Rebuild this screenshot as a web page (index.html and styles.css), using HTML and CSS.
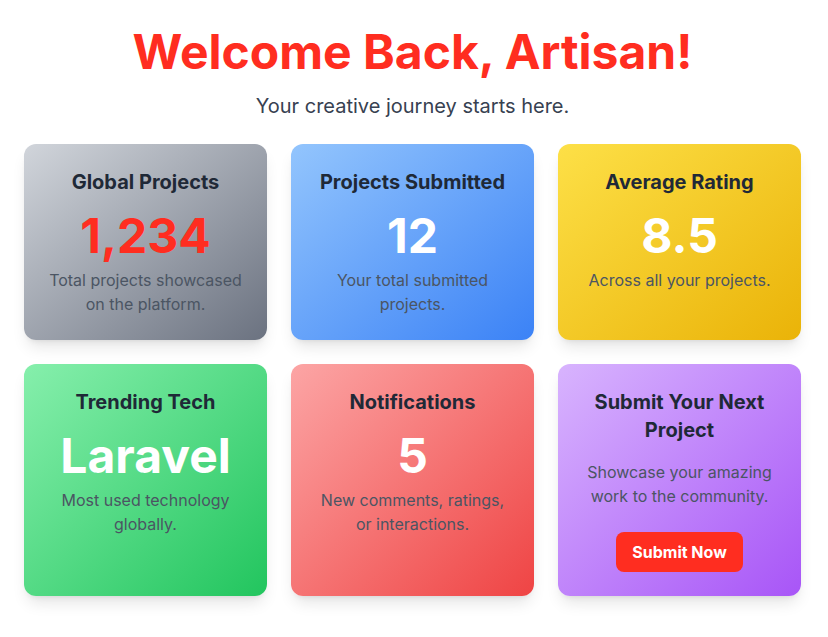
FILE: index.html
```html
<!DOCTYPE html>
<html lang="en">
<head>
<meta charset="utf-8">
<title>Dashboard</title>
<link rel="stylesheet" href="styles.css">
</head>
<body>
<main class="page">
  <header class="hero">
    <h1 class="hero-title">Welcome Back, Artisan!</h1>
    <p class="hero-sub">Your creative journey starts here.</p>
  </header>
  <section class="grid">
    <div class="card card-gray">
      <h2 class="card-title">Global Projects</h2>
      <p class="card-num num-red">1,234</p>
      <p class="card-desc">Total projects showcased on the platform.</p>
    </div>
    <div class="card card-blue">
      <h2 class="card-title">Projects Submitted</h2>
      <p class="card-num">12</p>
      <p class="card-desc">Your total submitted projects.</p>
    </div>
    <div class="card card-yellow">
      <h2 class="card-title">Average Rating</h2>
      <p class="card-num">8.5</p>
      <p class="card-desc">Across all your projects.</p>
    </div>
    <div class="card card-green">
      <h2 class="card-title">Trending Tech</h2>
      <p class="card-num">Laravel</p>
      <p class="card-desc">Most used technology globally.</p>
    </div>
    <div class="card card-red">
      <h2 class="card-title">Notifications</h2>
      <p class="card-num">5</p>
      <p class="card-desc">New comments, ratings, or interactions.</p>
    </div>
    <div class="card card-purple">
      <h2 class="card-title">Submit Your Next Project</h2>
      <p class="card-desc card-desc-cta">Showcase your amazing work to the community.</p>
      <a class="btn" href="#">Submit Now</a>
    </div>
  </section>
</main>
</body>
</html>
```

FILE: styles.css
```css
* { box-sizing: border-box; }
html, body { margin: 0; padding: 0; background: #ffffff; }
body {
  font-family: Inter, "Noto Sans", "Liberation Sans", sans-serif;
  color: #1f2937;
}
.page {
  padding: 28px 27px 40px 24px;
}
.hero { text-align: center; }
.hero-title {
  margin: 0;
  font-size: 48px;
  line-height: 1;
  font-weight: 700;
  color: #ff2d20;
}
.hero-sub {
  margin: 16px 0 0;
  font-size: 20px;
  line-height: 28px;
  color: #374151;
}
.grid {
  margin-top: 24px;
  display: grid;
  grid-template-columns: repeat(3, 1fr);
  gap: 24px;
}
.card {
  border-radius: 12px;
  padding: 24px;
  text-align: center;
  box-shadow: 0 10px 15px -3px rgba(0,0,0,0.1), 0 4px 6px -4px rgba(0,0,0,0.1);
}
.card-gray { background: linear-gradient(to bottom right, #d1d5db, #6b7280); }
.card-blue { background: linear-gradient(to bottom right, #93c5fd, #3b82f6); }
.card-yellow { background: linear-gradient(to bottom right, #fde047, #eab308); }
.card-green { background: linear-gradient(to bottom right, #86efac, #22c55e); }
.card-red { background: linear-gradient(to bottom right, #fca5a5, #ef4444); }
.card-purple { background: linear-gradient(to bottom right, #d8b4fe, #a855f7); }
.card-title {
  margin: 0 0 16px;
  font-size: 20px;
  line-height: 28px;
  font-weight: 700;
  color: #1f2937;
}
.card-num {
  margin: 0 0 8px;
  font-size: 48px;
  line-height: 1;
  font-weight: 700;
  color: #ffffff;
}
.num-red { color: #ff2d20; }
.card-desc {
  margin: 0;
  font-size: 16px;
  line-height: 24px;
  color: #4b5563;
}
.card-desc-cta { margin-bottom: 24px; }
.btn {
  display: inline-block;
  padding: 8px 16px;
  border-radius: 8px;
  background: #ff2d20;
  color: #ffffff;
  font-weight: 700;
  font-size: 16px;
  line-height: 24px;
  text-decoration: none;
}
```
